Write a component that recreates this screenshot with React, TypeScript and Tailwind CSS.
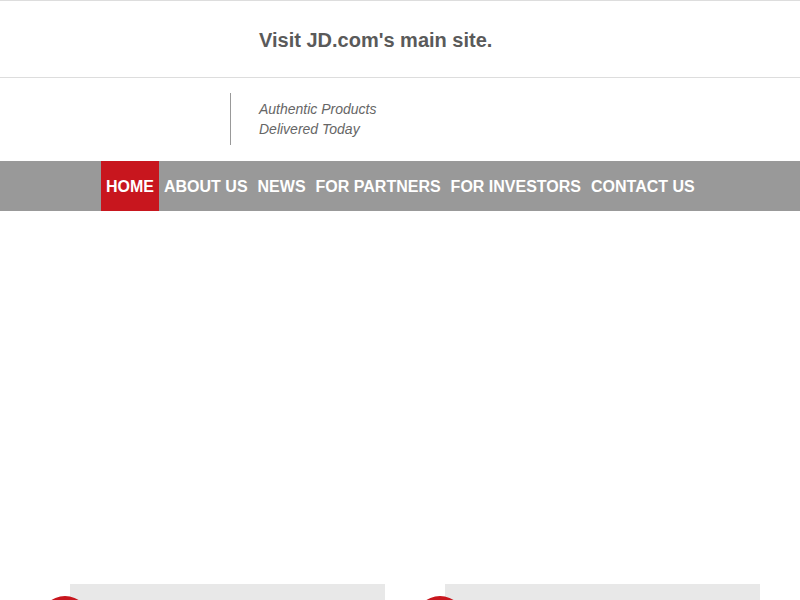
export default function App() {
  const nav = ["HOME", "ABOUT US", "NEWS", "FOR PARTNERS", "FOR INVESTORS", "CONTACT US"];

  return (
    <div className="w-[800px] h-[600px] overflow-hidden bg-white font-['Liberation_Sans',Arial,sans-serif]">
      <div className="border-t border-b border-[#dddddd] h-[78px] flex items-center pl-[259px] pt-[2px]">
        <span className="text-[20px] font-bold text-[#5a5a5a]">Visit JD.com's main site.</span>
      </div>

      <div className="h-[83px] flex items-start pt-[15px] pl-[230px]">
        <div className="w-px h-[52px] bg-[#999999]"></div>
        <div className="pl-[28px] pt-[6px] text-[14px] leading-[20px] italic text-[#666666]">
          <div>Authentic Products</div>
          <div>Delivered Today</div>
        </div>
      </div>

      <nav className="h-[50px] bg-[#999999] flex pl-[101px]">
        {nav.map((item, i) => (
          <a
            key={item}
            className={`h-full flex items-center px-[5px] pt-[1px] text-[16px] font-bold text-white ${
              i === 0 ? "bg-[#c8161e]" : ""
            }`}
          >
            {item}
          </a>
        ))}
      </nav>

      <div className="h-[373px]"></div>

      <div className="flex">
        <div className="relative ml-[70px] w-[315px] h-[40px] bg-[#e8e8e8]">
          <div className="absolute left-[-30px] top-[12px] w-[50px] h-[50px] rounded-full bg-[#c8161e]"></div>
        </div>
        <div className="relative ml-[60px] w-[315px] h-[40px] bg-[#e8e8e8]">
          <div className="absolute left-[-30px] top-[12px] w-[50px] h-[50px] rounded-full bg-[#c8161e]"></div>
        </div>
      </div>
    </div>
  );
}
